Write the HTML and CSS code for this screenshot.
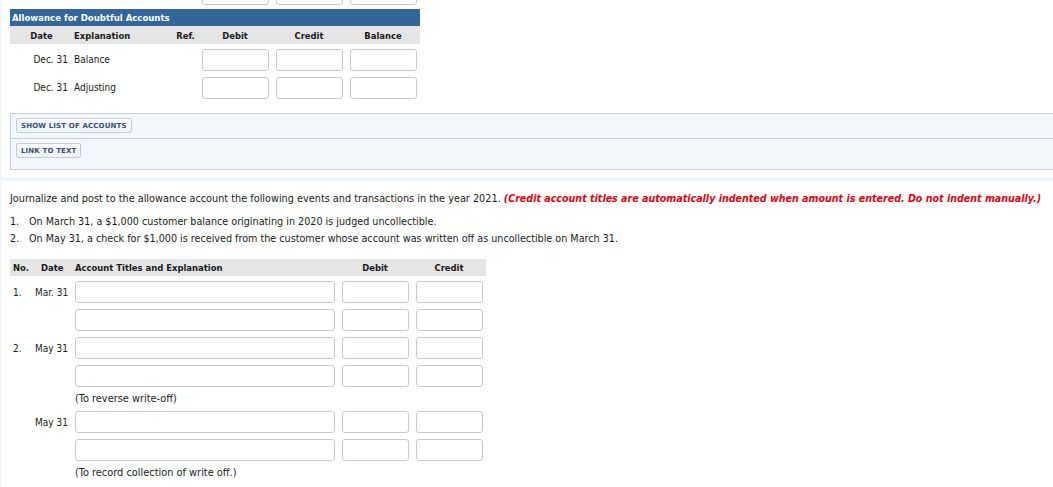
FILE: index.html
```html
<!DOCTYPE html>
<html>
<head>
<meta charset="utf-8">
<title>Allowance for Doubtful Accounts</title>
<link rel="stylesheet" href="styles.css">
</head>
<body>
<div class="page">
  <section class="card card-top">
    <div class="ledger">
      <div class="lrow lrow-prev">
        <span></span><span></span><span></span>
        <div class="box"></div><div class="box"></div><div class="box"></div>
      </div>
      <div class="ledger-title">Allowance for Doubtful Accounts</div>
      <div class="lrow lhead">
        <span>Date</span><span class="left">Explanation</span><span>Ref.</span><span>Debit</span><span>Credit</span><span>Balance</span>
      </div>
      <div class="lrow">
        <span class="date">Dec. 31</span><span class="expl">Balance</span><span></span>
        <div class="box"></div><div class="box"></div><div class="box"></div>
      </div>
      <div class="lrow">
        <span class="date">Dec. 31</span><span class="expl">Adjusting</span><span></span>
        <div class="box"></div><div class="box"></div><div class="box"></div>
      </div>
    </div>
    <div class="tools">
      <div class="tools-row"><button class="btn">Show List of Accounts</button></div>
      <div class="tools-row tools-row-last"><button class="btn">Link to Text</button></div>
    </div>
  </section>

  <section class="card card-main">
    <p class="intro">Journalize and post to the allowance account the following events and transactions in the year 2021. <em class="warn">(Credit account titles are automatically indented when amount is entered. Do not indent manually.)</em></p>
    <ol class="events">
      <li><span class="num">1.</span><span>On March 31, a $1,000 customer balance originating in 2020 is judged uncollectible.</span></li>
      <li><span class="num">2.</span><span>On May 31, a check for $1,000 is received from the customer whose account was written off as uncollectible on March 31.</span></li>
    </ol>

    <div class="journal">
      <div class="jrow jhead">
        <span class="no">No.</span><span class="jdate-h">Date</span><span class="acct-h">Account Titles and Explanation</span><span class="c">Debit</span><span class="c">Credit</span>
      </div>
      <div class="jrow">
        <span class="no">1.</span><span class="jdate">Mar. 31</span><div class="box wide"></div><div class="box"></div><div class="box"></div>
      </div>
      <div class="jrow">
        <span></span><span></span><div class="box wide"></div><div class="box"></div><div class="box"></div>
      </div>
      <div class="jrow">
        <span class="no">2.</span><span class="jdate">May 31</span><div class="box wide"></div><div class="box"></div><div class="box"></div>
      </div>
      <div class="jrow">
        <span></span><span></span><div class="box wide"></div><div class="box"></div><div class="box"></div>
      </div>
      <div class="jnote">(To reverse write-off)</div>
      <div class="jrow">
        <span></span><span class="jdate">May 31</span><div class="box wide"></div><div class="box"></div><div class="box"></div>
      </div>
      <div class="jrow">
        <span></span><span></span><div class="box wide"></div><div class="box"></div><div class="box"></div>
      </div>
      <div class="jnote">(To record collection of write off.)</div>
    </div>
  </section>
</div>
</body>
</html>
```

FILE: styles.css
```css
* { box-sizing: border-box; }
html, body { margin: 0; padding: 0; }
body {
  background: #f3f6f9;
  font-family: "DejaVu Sans Condensed", "Liberation Sans", sans-serif;
  font-size: 10px;
  color: #1a1a1a;
  width: 1053px;
  height: 487px;
  overflow: hidden;
}
.page {
  padding-left: 2px;
  display: flex;
  flex-direction: column;
  gap: 4px;
}
.card { background: #fff; }

/* top ledger card */
.card-top {
  height: 177px;
  padding-left: 8px;
  overflow: hidden;
}
.ledger { width: 410px; }
.lrow {
  display: grid;
  grid-template-columns: 63px 100px 25px 74px 74px 74px;
  align-items: center;
  height: 28px;
  white-space: nowrap;
}
.lrow-prev { margin-top: -17px; height: 22px; }
.box {
  width: 67px;
  height: 22px;
  border: 1px solid #c9c9c9;
  border-radius: 3px;
  background: #fff;
  justify-self: center;
}
.ledger-title {
  margin-top: 4px;
  height: 17px;
  line-height: 17px;
  background: #336699;
  color: #fff;
  font-weight: bold;
  font-size: 9.5px;
  padding-left: 2px;
}
.lhead {
  height: 18px;
  background: #e5e5e5;
  font-weight: bold;
  font-size: 9.4px;
  text-align: center;
  margin-bottom: 2px;
}
.lhead .left { text-align: left; padding-left: 1px; }
.date { text-align: right; padding-right: 5px; padding-bottom: 2px; }
.expl { padding-left: 1px; padding-bottom: 2px; }

.tools {
  margin-top: 11px;
  background: #f3f6fa;
  border: 1px solid #c8ced8;
  border-right: none;
}
.tools-row {
  padding: 4px 5px 5px;
  border-bottom: 1px solid #c8ced8;
}
.tools-row-last { border-bottom: none; padding-bottom: 11px; }
.btn {
  display: block;
  height: 15px;
  padding: 0 4px;
  font-family: "DejaVu Sans", sans-serif;
  font-size: 7px;
  font-weight: bold;
  letter-spacing: 0.15px;
  text-transform: uppercase;
  color: #34507a;
  background: linear-gradient(#fbfcfd, #eef1f5);
  border: 1px solid #c6ccd6;
  border-radius: 2px;
}

/* main card */
.card-main {
  padding: 10px 0 0 8px;
  height: 306px;
}
.intro {
  margin: 0;
  height: 14px;
  line-height: 14px;
  font-size: 10.8px;
  white-space: nowrap;
}
.warn {
  color: #e60012;
  font-weight: bold;
  font-size: 10.6px;
}
.events {
  list-style: none;
  margin: 8px 0 0;
  padding: 0;
  font-size: 10.7px;
}
.events li {
  display: flex;
  height: 17px;
  line-height: 17px;
}
.events .num { width: 19px; }

.journal {
  width: 476px;
  margin-top: 12px;
}
.jrow {
  display: grid;
  grid-template-columns: 25px 37px 266px 74px 74px;
  align-items: center;
  height: 28px;
  white-space: nowrap;
}
.jhead {
  height: 17px;
  background: #e5e5e5;
  font-weight: bold;
  font-size: 9.4px;
  margin-bottom: 2px;
}
.jhead .c { text-align: center; }
.no { padding-left: 3px; }
.jdate-h { padding-left: 6px; }
.acct-h { padding-left: 3px; }
.jdate { text-align: right; padding-right: 4px; }
.box.wide { width: 260px; justify-self: start; margin-left: 3px; }
.jnote {
  height: 18px;
  line-height: 18px;
  padding-left: 65px;
  font-size: 10.9px;
  color: #222;
}
```
